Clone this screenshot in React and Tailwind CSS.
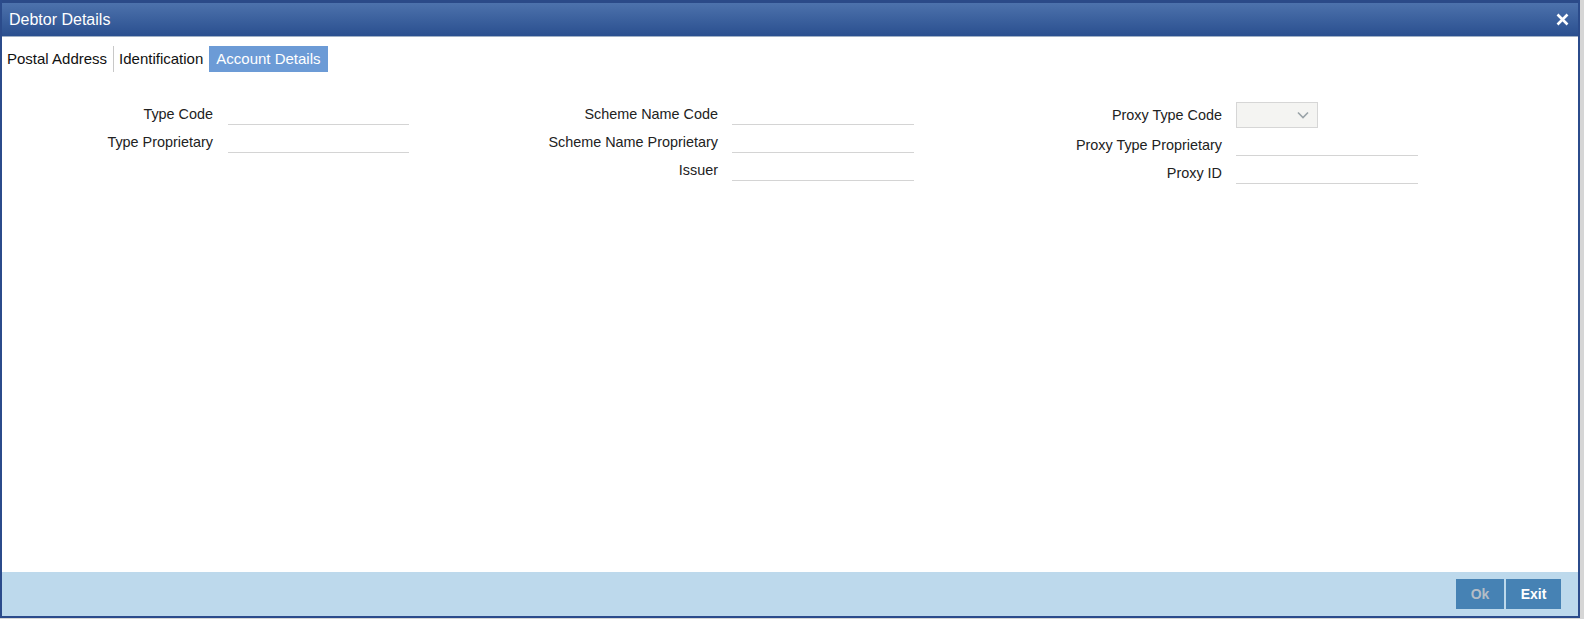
import React from 'react';

const Field = ({ label }) => (
  <div className="flex items-start">
    <label className="h-[23px] w-[200px] shrink-0 text-right text-[14.4px] leading-[25px] text-[#222]">
      {label}
    </label>
    <div className="ml-[14px] h-[23px] w-[182px] border-b border-[#d4d4d4]" />
  </div>
);

const App = () => {
  return (
    <div className="flex h-[619px] w-[1584px] bg-[#d6d6d6] font-['Liberation_Sans',Arial,sans-serif]">
      <div className="flex h-[618px] w-[1580px] flex-col border-x-2 border-b-2 border-[#2b4b8b] bg-white">
        {/* Header */}
        <div className="flex h-[37px] shrink-0 items-center justify-between border-t-[3px] border-b border-t-[#2b4a88] border-b-[#9fb0c6] bg-gradient-to-b from-[#4d72ac] to-[#2a4f8f] pl-[7px] pr-[9px]">
          <span className="text-[16px] text-white">Debtor Details</span>
          <svg width="13" height="13" viewBox="0 0 13 13">
            <path d="M1.5 1.5 11.5 11.5M11.5 1.5 1.5 11.5" stroke="#fff" strokeWidth="2.6" />
          </svg>
        </div>

        {/* Tabs */}
        <div className="mt-[9px] flex h-[26px] items-stretch text-[15px]">
          <div className="flex items-center pl-[5px] pr-[6px] text-[#111]">Postal Address</div>
          <div className="flex items-center border-l border-[#c8c8c8] pl-[5px] pr-[6px] text-[#111]">Identification</div>
          <div className="flex items-center bg-[#6c9bd6] px-[7px] text-white">Account Details</div>
        </div>

        {/* Form */}
        <div className="mt-[30px] flex flex-1 items-start">
          <div className="flex flex-col gap-[5px] pl-[1px]">
            <div className="flex items-start">
              <label className="h-[23px] w-[210px] shrink-0 text-right text-[14.4px] leading-[25px] text-[#222]">Type Code</label>
              <div className="ml-[15px] h-[23px] w-[181px] border-b border-[#d4d4d4]" />
            </div>
            <div className="flex items-start">
              <label className="h-[23px] w-[210px] shrink-0 text-right text-[14.4px] leading-[25px] text-[#222]">Type Proprietary</label>
              <div className="ml-[15px] h-[23px] w-[181px] border-b border-[#d4d4d4]" />
            </div>
          </div>

          <div className="ml-[109px] flex flex-col gap-[5px]">
            <Field label="Scheme Name Code" />
            <Field label="Scheme Name Proprietary" />
            <Field label="Issuer" />
          </div>

          <div className="ml-[108px] flex flex-col gap-[5px]">
            <div className="flex items-center">
              <label className="w-[200px] shrink-0 text-right text-[14.4px] leading-[26px] text-[#222]">Proxy Type Code</label>
              <div className="ml-[14px] flex h-[26px] w-[82px] items-center justify-end border border-[#d6d6d6] bg-[#f4f4f2] pr-[8px]">
                <svg width="12" height="8" viewBox="0 0 12 8" fill="none">
                  <path d="M1 1.5 6 6.5 11 1.5" stroke="#9aa3a8" strokeWidth="1.6" />
                </svg>
              </div>
            </div>
            <Field label="Proxy Type Proprietary" />
            <Field label="Proxy ID" />
          </div>
        </div>

        {/* Footer */}
        <div className="flex h-[44px] shrink-0 items-start justify-end gap-[2px] bg-[#bdd9ec] pr-[17px] pt-[7px]">
          <button className="h-[30px] w-[48px] bg-[#4682b4] text-[14px] font-bold text-[#b4bdc6]">Ok</button>
          <button className="h-[30px] w-[55px] bg-[#4682b4] text-[14px] font-bold text-white">Exit</button>
        </div>
      </div>
    </div>
  );
};

export default App;
